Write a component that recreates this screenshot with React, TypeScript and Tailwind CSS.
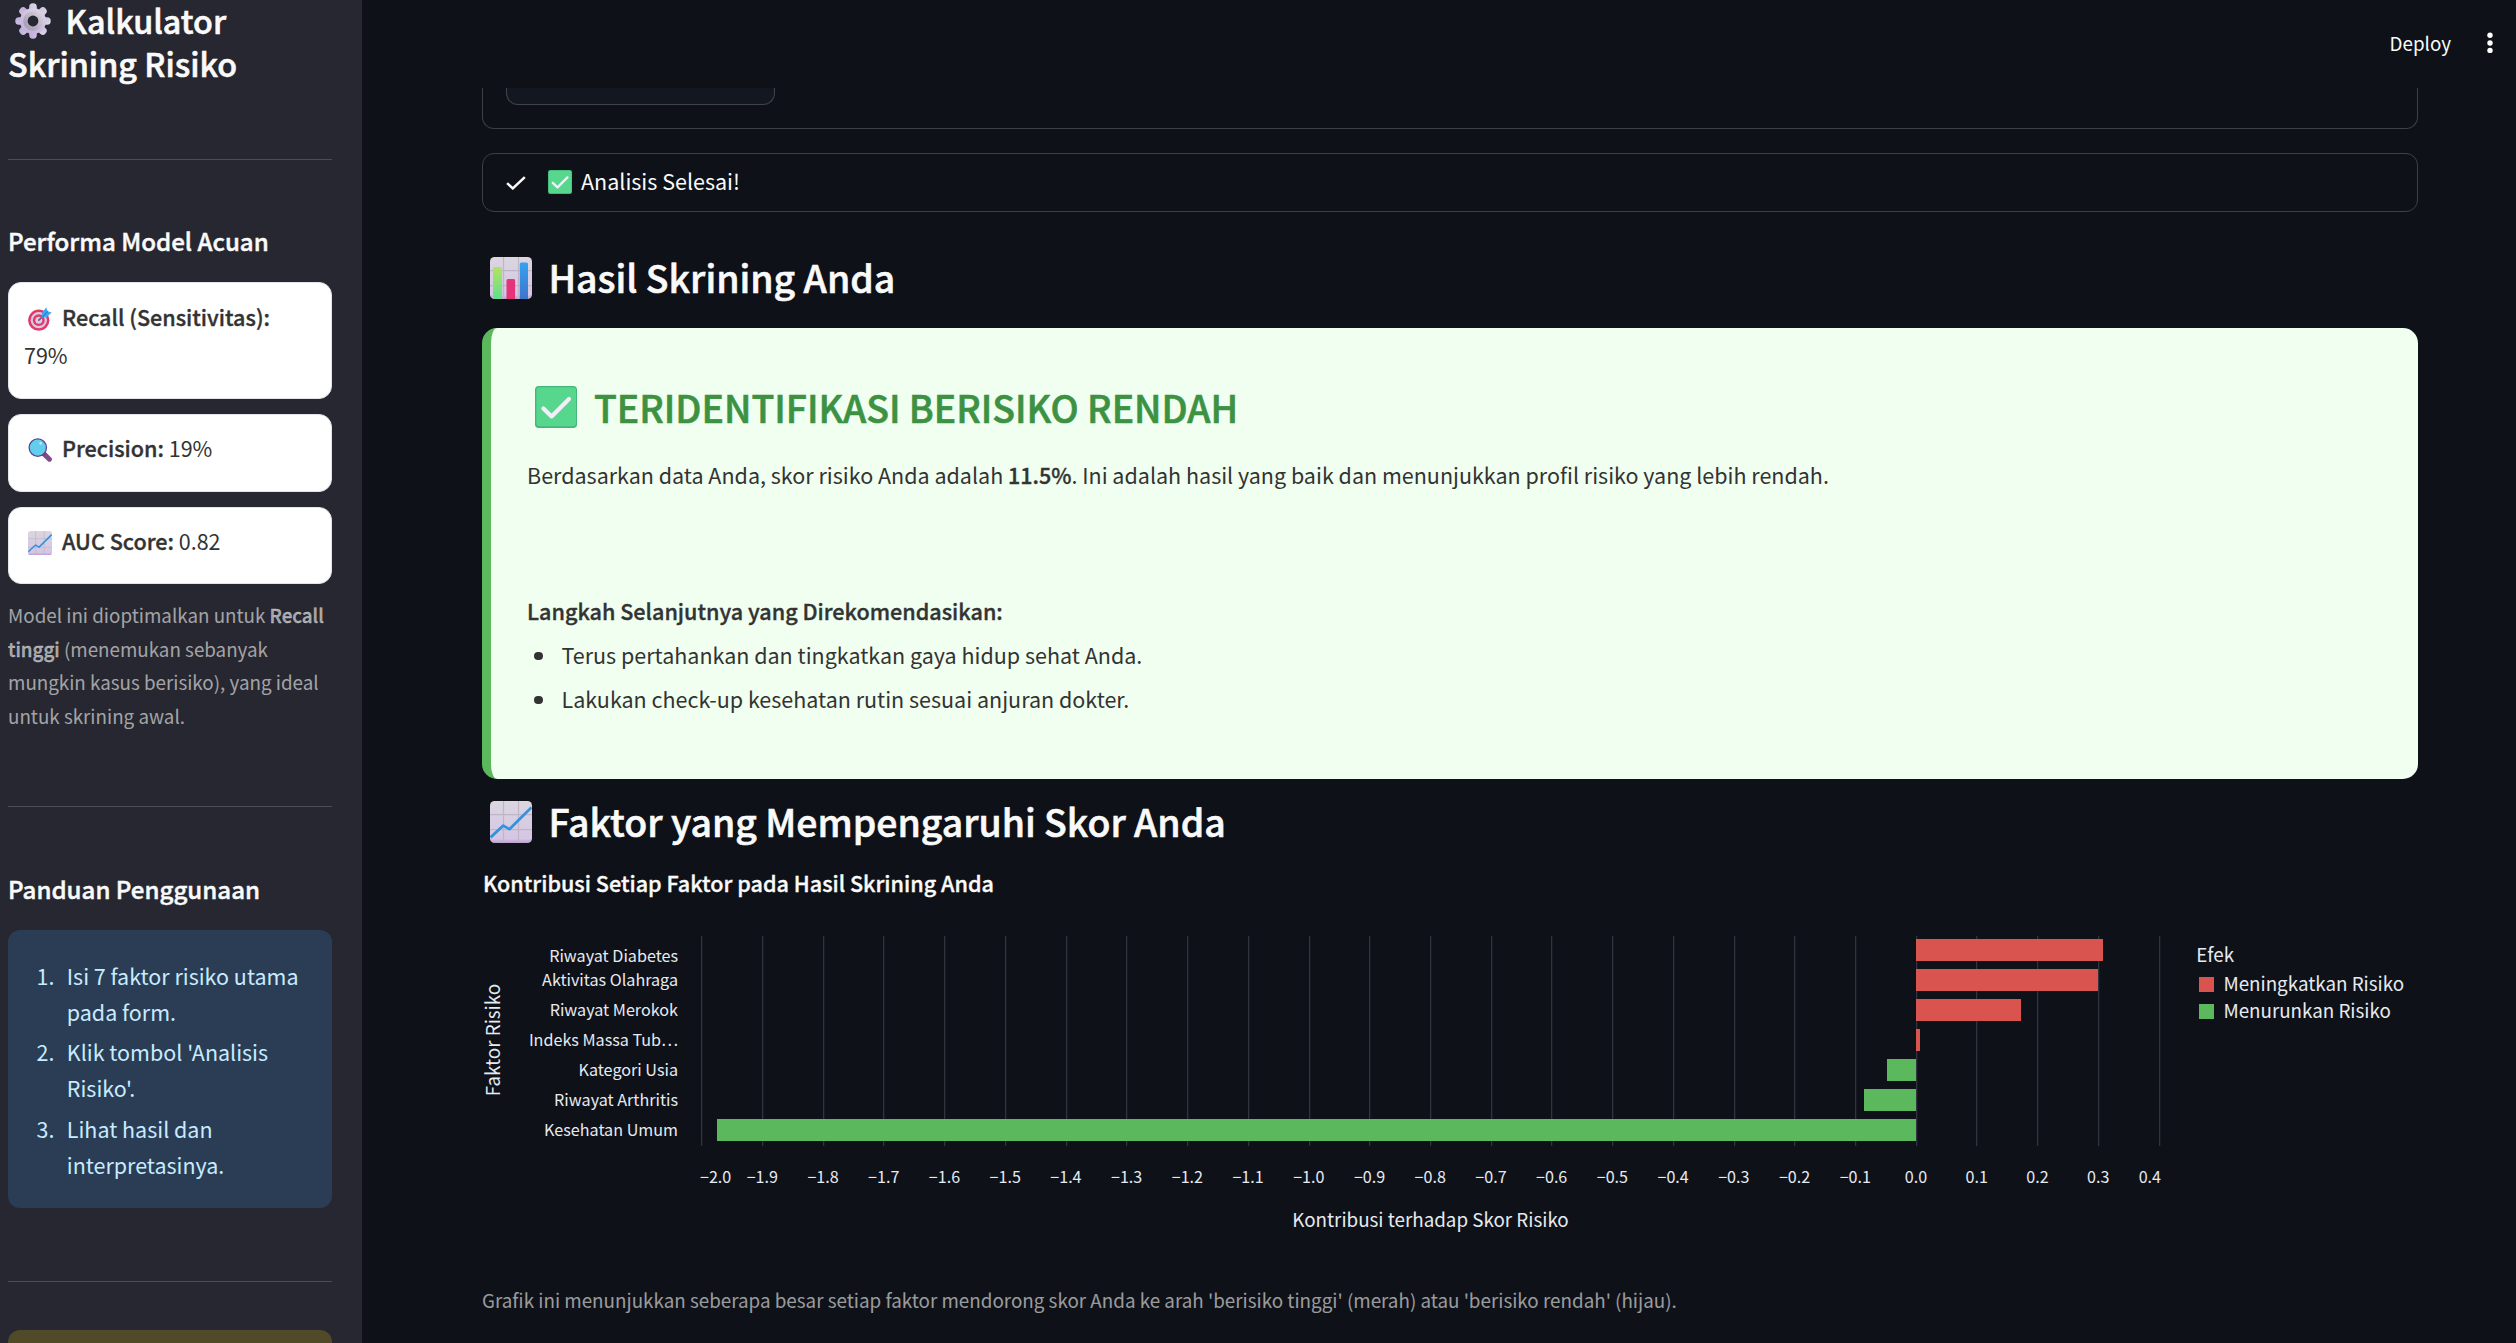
import React from "react";

type IconProps = { className?: string };

/* ---------- pictograms ---------- */

function GearEmoji({ className }: IconProps) {
  return (
    <svg viewBox="0 0 36 36" className={className} aria-hidden="true">
      <defs>
        <linearGradient id="gearBody" x1="0.8" y1="0" x2="0.2" y2="1">
          <stop offset="0" stopColor="#dcd3e8" />
          <stop offset="0.5" stopColor="#cdc2dd" />
          <stop offset="1" stopColor="#c3aee0" />
        </linearGradient>
        <linearGradient id="gearRing" x1="1" y1="0" x2="0" y2="1">
          <stop offset="0" stopColor="#dcd5e2" />
          <stop offset="1" stopColor="#9c94a8" />
        </linearGradient>
      </defs>
      <g fill="url(#gearBody)">
        {[0, 45, 90, 135].map((a) => (
          <rect key={a} x="14.2" y="0.3" width="7.6" height="35.4" rx="3.6" transform={`rotate(${a} 18 18)`} />
        ))}
        <circle cx="18" cy="18" r="13" />
      </g>
      <circle cx="18" cy="18" r="9.8" fill="url(#gearRing)" />
      <circle cx="18" cy="18" r="5.4" fill="#262730" />
    </svg>
  );
}

function TargetEmoji({ className }: IconProps) {
  return (
    <svg viewBox="0 0 24 24" className={className} aria-hidden="true">
      <circle cx="10.8" cy="13.2" r="10.6" fill="#e0396a" />
      <circle cx="10.8" cy="13.2" r="8.1" fill="#d9cbe0" />
      <circle cx="10.8" cy="13.2" r="5.9" fill="#e5366b" />
      <circle cx="10.8" cy="13.2" r="3.5" fill="#d8cde2" />
      <path d="M10.8 13.2 16 8.4" stroke="#6b5a86" strokeWidth="1.6" strokeLinecap="round" />
      <path d="M13.4 10.8 13.9 6 18.3 0.2 19.4 4.6 23.8 5.4 18.4 10.2Z" fill="#3fa9f0" />
      <path d="M14.4 9.8 20.2 4" stroke="#1e86d8" strokeWidth="1.1" />
    </svg>
  );
}

function MagnifierEmoji({ className }: IconProps) {
  return (
    <svg viewBox="0 0 24 24" className={className} aria-hidden="true">
      <path d="M15.4 15.4 21.4 21.2" stroke="#834a88" strokeWidth="5" strokeLinecap="round" />
      <path d="M14 14 16.6 16.6" stroke="#5b3a73" strokeWidth="2.6" />
      <circle cx="9.8" cy="9.6" r="8.7" fill="#62cdec" stroke="#5a4490" strokeWidth="1.3" />
      <circle cx="12.6" cy="5.4" r="1.3" fill="#b8ecfb" />
    </svg>
  );
}

function GridTile({ id }: { id: string }) {
  return (
    <>
      <defs>
        <linearGradient id={id} x1="0" y1="0" x2="0" y2="1">
          <stop offset="0" stopColor="#dbd6df" />
          <stop offset="0.9" stopColor="#d5c6e4" />
          <stop offset="1" stopColor="#b9a0cf" />
        </linearGradient>
      </defs>
      <rect width="42" height="42" rx="4.5" fill={`url(#${id})`} />
      <path d="M13.5 0v42M28.5 0v42M0 13.6h42M0 28.6h42" stroke="#bfb5c9" strokeWidth="1.2" />
    </>
  );
}

function TrendEmoji({ className, id }: IconProps & { id: string }) {
  return (
    <svg viewBox="0 0 42 42" className={className} aria-hidden="true">
      <GridTile id={id} />
      <path d="M0.6 36.4 13.3 24.6 19.4 28.2 41.4 6.4" fill="none" stroke="#3093e0" strokeWidth="2.7" strokeLinejoin="round" />
    </svg>
  );
}

function BarsEmoji({ className }: IconProps) {
  return (
    <svg viewBox="0 0 42 42" className={className} aria-hidden="true">
      <defs>
        <linearGradient id="barGreen" x1="0" y1="0" x2="0" y2="1">
          <stop offset="0" stopColor="#b2e35f" />
          <stop offset="1" stopColor="#5fe08e" />
        </linearGradient>
        <linearGradient id="barBlue" x1="0" y1="0" x2="0" y2="1">
          <stop offset="0" stopColor="#35a2f2" />
          <stop offset="1" stopColor="#3f74cd" />
        </linearGradient>
      </defs>
      <GridTile id="barsTile" />
      <path d="M3 42V11.5q0-1.5 1.5-1.5h6q1.5 0 1.5 1.5V42Z" fill="url(#barGreen)" />
      <path d="M16.5 42V23.5q0-1.5 1.5-1.5h5.6q1.5 0 1.5 1.5V42Z" fill="#e5347a" />
      <path d="M29.8 42V7q0-1.5 1.5-1.5h5.2q1.5 0 1.5 1.5V42Z" fill="url(#barBlue)" />
    </svg>
  );
}

function CheckEmoji({ className }: IconProps) {
  return (
    <svg viewBox="0 0 42 42" className={className} aria-hidden="true">
      <rect width="42" height="42" rx="3.8" fill="#43b77a" />
      <rect x="1.4" y="1.2" width="39.6" height="39" rx="3" fill="#57d68d" />
      <path d="M8.4 22.4 16.6 30.4 34 13" fill="none" stroke="#f6ecfb" strokeWidth="4.2" strokeLinecap="round" strokeLinejoin="round" />
    </svg>
  );
}

/* ---------- sidebar ---------- */

function Divider({ className }: IconProps) {
  return <div className={`h-px shrink-0 bg-[#4b4c54] ${className}`} />;
}

function Metric({ icon, label, value, className }: { icon: React.ReactNode; label: string; value: string; className: string }) {
  return (
    <div className={`shrink-0 rounded-[13px] border border-[#e2e4ea] bg-white px-[15px] pt-[14px] text-[21.48px] leading-[38.2px] text-[#333] ${className}`}>
      {icon}
      <span className="text-[21.6px] font-medium [-webkit-text-stroke:0.35px]">{label}</span> {value}
    </div>
  );
}

const STEPS: [string, string][] = [
  ["Isi 7 faktor risiko utama", "pada form."],
  ["Klik tombol 'Analisis", "Risiko'."],
  ["Lihat hasil dan", "interpretasinya."],
];

function Sidebar() {
  const inline = "mr-[10px] ml-1 inline-block size-6 align-[-4.5px]";
  return (
    <aside className="flex h-full w-[362px] shrink-0 flex-col overflow-hidden bg-[#262730] pr-[30px] pl-2">
      <h1 className="-mt-[1px] shrink-0 text-[32.3px] leading-[43.2px] font-medium whitespace-nowrap [-webkit-text-stroke:0.6px]">
        <GearEmoji className="mr-[15px] ml-[6.5px] inline-block size-9 align-[-5px]" />
        Kalkulator
        <br />
        Skrining Risiko
      </h1>
      <Divider className="mt-[73.6px]" />
      <h3 className="mt-[64.5px] shrink-0 text-[24.1px] leading-8 font-medium [-webkit-text-stroke:0.45px]">Performa Model Acuan</h3>
      <Metric icon={<TargetEmoji className={inline} />} label="Recall (Sensitivitas):" value="79%" className="mt-[25.5px] h-[117px] pt-[15px]" />
      <Metric icon={<MagnifierEmoji className={inline} />} label="Precision:" value="19%" className="mt-[15px] h-[78px]" />
      <Metric icon={<TrendEmoji id="trendSmall" className={inline} />} label="AUC Score:" value="0.82" className="mt-[15px] h-[77px]" />
      <p className="mt-[14.3px] shrink-0 text-[18.8px] leading-[33.6px] whitespace-nowrap text-[#fafafa]/60">
        Model ini dioptimalkan untuk <b className="font-medium [-webkit-text-stroke:0.35px]">Recall</b>
        <br />
        <b className="font-medium [-webkit-text-stroke:0.35px]">tinggi</b> (menemukan sebanyak
        <br />
        mungkin kasus berisiko), yang ideal
        <br />
        untuk skrining awal.
      </p>
      <Divider className="mt-[73.3px]" />
      <h3 className="mt-[65.8px] shrink-0 text-[24.1px] leading-8 font-medium [-webkit-text-stroke:0.45px]">Panduan Penggunaan</h3>
      <ol className="mt-[25.2px] flex h-[278px] shrink-0 flex-col gap-[4.5px] rounded-xl bg-[#2b3d55] pt-[27.6px] text-[21.48px] leading-9 text-[#c7ebff]">
        {STEPS.map(([a, b], i) => (
          <li key={a} className="flex">
            <span className="w-[46.5px] text-right">{i + 1}.</span>
            <span className="ml-[12.3px] whitespace-nowrap">
              {a}
              <br />
              {b}
            </span>
          </li>
        ))}
      </ol>
      <Divider className="mt-[73px]" />
      <div className="mt-12 h-24 shrink-0 rounded-xl bg-[#504a29]" />
    </aside>
  );
}

/* ---------- contribution chart ---------- */

const FACTORS: { name: string; y: number; from: number; to: number; up: boolean }[] = [
  { name: "Riwayat Diabetes", y: 962, from: 1916, to: 2103, up: true },
  { name: "Aktivitas Olahraga", y: 986, from: 1916, to: 2098, up: true },
  { name: "Riwayat Merokok", y: 1016, from: 1916, to: 2021, up: true },
  { name: "Indeks Massa Tub…", y: 1046, from: 1916, to: 1920, up: true },
  { name: "Kategori Usia", y: 1076, from: 1887, to: 1916, up: false },
  { name: "Riwayat Arthritis", y: 1106, from: 1864, to: 1916, up: false },
  { name: "Kesehatan Umum", y: 1136, from: 717, to: 1916, up: false },
];

function Chart() {
  const ticks = Array.from({ length: 25 }, (_, i) => i - 20);
  return (
    <svg viewBox="482 910 1936 340" className="block h-[340px] w-[1936px] shrink-0" fill="#e6eaf1">
      {ticks.map((t) => (
        <rect key={t} x={Math.floor(1916.2 + t * 60.72)} y="936" width="1.3" height="210" fill="#31333f" />
      ))}
      {FACTORS.map((f, i) => (
        <g key={f.name}>
          <rect x={f.from} y={939 + i * 30} width={f.to - f.from} height="22" fill={f.up ? "#d9534f" : "#5cb85c"} />
          <text x="678" y={f.y} fontSize="16.15" textAnchor="end">
            {f.name}
          </text>
        </g>
      ))}
      {ticks.map((t) => (
        <text
          key={t}
          x={t === -20 ? 700 : t === 4 ? 2161 : 1916 + t * 60.72}
          y="1183"
          fontSize="16.1"
          textAnchor={t === -20 ? "start" : t === 4 ? "end" : "middle"}
        >
          {`${t < 0 ? "−" : ""}${(Math.abs(t) / 10).toFixed(1)}`}
        </text>
      ))}
      <text x="1430.5" y="1227.4" fontSize="18.8" textAnchor="middle">
        Kontribusi terhadap Skor Risiko
      </text>
      <text transform="translate(499.5 1040) rotate(-90)" fontSize="18.8" textAnchor="middle">
        Faktor Risiko
      </text>
      <text x="2196.3" y="962" fontSize="18.8">Efek</text>
      <rect x="2199" y="977" width="15" height="15" fill="#d9534f" />
      <text x="2223.4" y="991" fontSize="18.8">Meningkatkan Risiko</text>
      <rect x="2199" y="1004" width="15" height="15" fill="#5cb85c" />
      <text x="2223.4" y="1018" fontSize="18.8">Menurunkan Risiko</text>
    </svg>
  );
}

/* ---------- main column ---------- */

function ResultCard() {
  return (
    <section className="mt-[9px] flex h-[451px] shrink-0 flex-col rounded-[15px] border-l-[9px] border-[#5cb85c] bg-[#f0fff0] pl-9 text-[21.5px] leading-[38px] whitespace-nowrap text-[#333]">
      <h2 className="mt-[53.5px] flex h-[50px] items-start text-[37.4px] leading-[50px] font-medium text-[#3d9142] [-webkit-text-stroke:0.6px]">
        <CheckEmoji className="mt-1 mr-[17px] ml-2 size-[42px]" />
        TERIDENTIFIKASI BERISIKO RENDAH
      </h2>
      <p className="mt-[24px]">
        Berdasarkan data Anda, skor risiko Anda adalah <b className="font-medium [-webkit-text-stroke:0.35px]">11.5%</b>. Ini adalah hasil yang baik dan menunjukkan profil risiko yang lebih rendah.
      </p>
      <p className="mt-[98.5px] text-[21.58px] font-medium [-webkit-text-stroke:0.35px]">Langkah Selanjutnya yang Direkomendasikan:</p>
      <ul className="mt-[6px] flex flex-col gap-[6px]">
        {["Terus pertahankan dan tingkatkan gaya hidup sehat Anda.", "Lakukan check-up kesehatan rutin sesuai anjuran dokter."].map((t) => (
          <li key={t} className="flex items-center">
            <span className="mt-0.5 mr-[19px] ml-[7px] size-[8.5px] rounded-full bg-[#333]" />
            {t}
          </li>
        ))}
      </ul>
    </section>
  );
}

function Main() {
  return (
    <main className="flex h-full min-w-0 flex-1 flex-col overflow-hidden">
      <header className="flex h-[88px] shrink-0 items-center justify-end pr-[23px]">
        <span className="-mt-[3px] text-[18.8px] leading-6">Deploy</span>
        <svg viewBox="0 0 6 24" className="ml-9 h-6 w-[6px]" fill="#fff" aria-hidden="true">
          <circle cx="3" cy="3.3" r="2.7" />
          <circle cx="3" cy="11" r="2.7" />
          <circle cx="3" cy="18.4" r="2.7" />
        </svg>
      </header>
      <div className="ml-[120px] flex w-[1936px] flex-col">
        <div className="h-[41px] shrink-0 rounded-b-xl border border-t-0 border-[#3d4044] pl-[23px]">
          <div className="h-[17px] w-[269px] rounded-b-xl border border-t-0 border-[#41444c] bg-[#131720]" />
        </div>
        <div className="mt-6 flex h-[59px] shrink-0 items-center rounded-xl border border-[#3d4044] pl-[23px] text-[21.5px] leading-9">
          <svg viewBox="0 0 20 14" className="h-[14px] w-5" fill="none" stroke="#fafafa" strokeWidth="2.5" aria-hidden="true">
            <path d="M1.1 7.2 6.8 12.4 18.8 1.1" />
          </svg>
          <CheckEmoji className="-mt-[2px] mr-[9px] ml-[22px] size-6" />
          <span className="-mt-[3px]">Analisis Selesai!</span>
        </div>
        <h2 className="mt-[40px] flex h-[67px] shrink-0 items-start text-[37.4px] leading-[50px] font-medium [-webkit-text-stroke:0.6px]">
          <BarsEmoji className="mt-[5px] mr-[16.4px] ml-2 size-[42px]" />
          Hasil Skrining Anda
        </h2>
        <ResultCard />
        <h2 className="mt-[17.4px] flex h-[50.6px] shrink-0 items-start text-[37.4px] leading-[50px] font-medium [-webkit-text-stroke:0.6px]">
          <TrendEmoji id="trendLarge" className="mt-[4.6px] mr-[16.4px] ml-2 size-[42px]" />
          Faktor yang Mempengaruhi Skor Anda
        </h2>
        <h4 className="mt-[20px] ml-px h-[43px] shrink-0 text-[21.58px] leading-8 font-medium [-webkit-text-stroke:0.35px]">Kontribusi Setiap Faktor pada Hasil Skrining Anda</h4>
        <Chart />
        <p className="mt-[33px] h-[34px] shrink-0 text-[18.82px] leading-[33.6px] text-[#fafafa]/60">
          Grafik ini menunjukkan seberapa besar setiap faktor mendorong skor Anda ke arah 'berisiko tinggi' (merah) atau 'berisiko rendah' (hijau).
        </p>
      </div>
    </main>
  );
}

export default function App() {
  return (
    <div className="flex h-[1343px] w-[2516px] overflow-hidden bg-[#0e1117] font-['Noto_Sans_CJK_SC',sans-serif] text-[#fafafa]">
      <Sidebar />
      <Main />
    </div>
  );
}
